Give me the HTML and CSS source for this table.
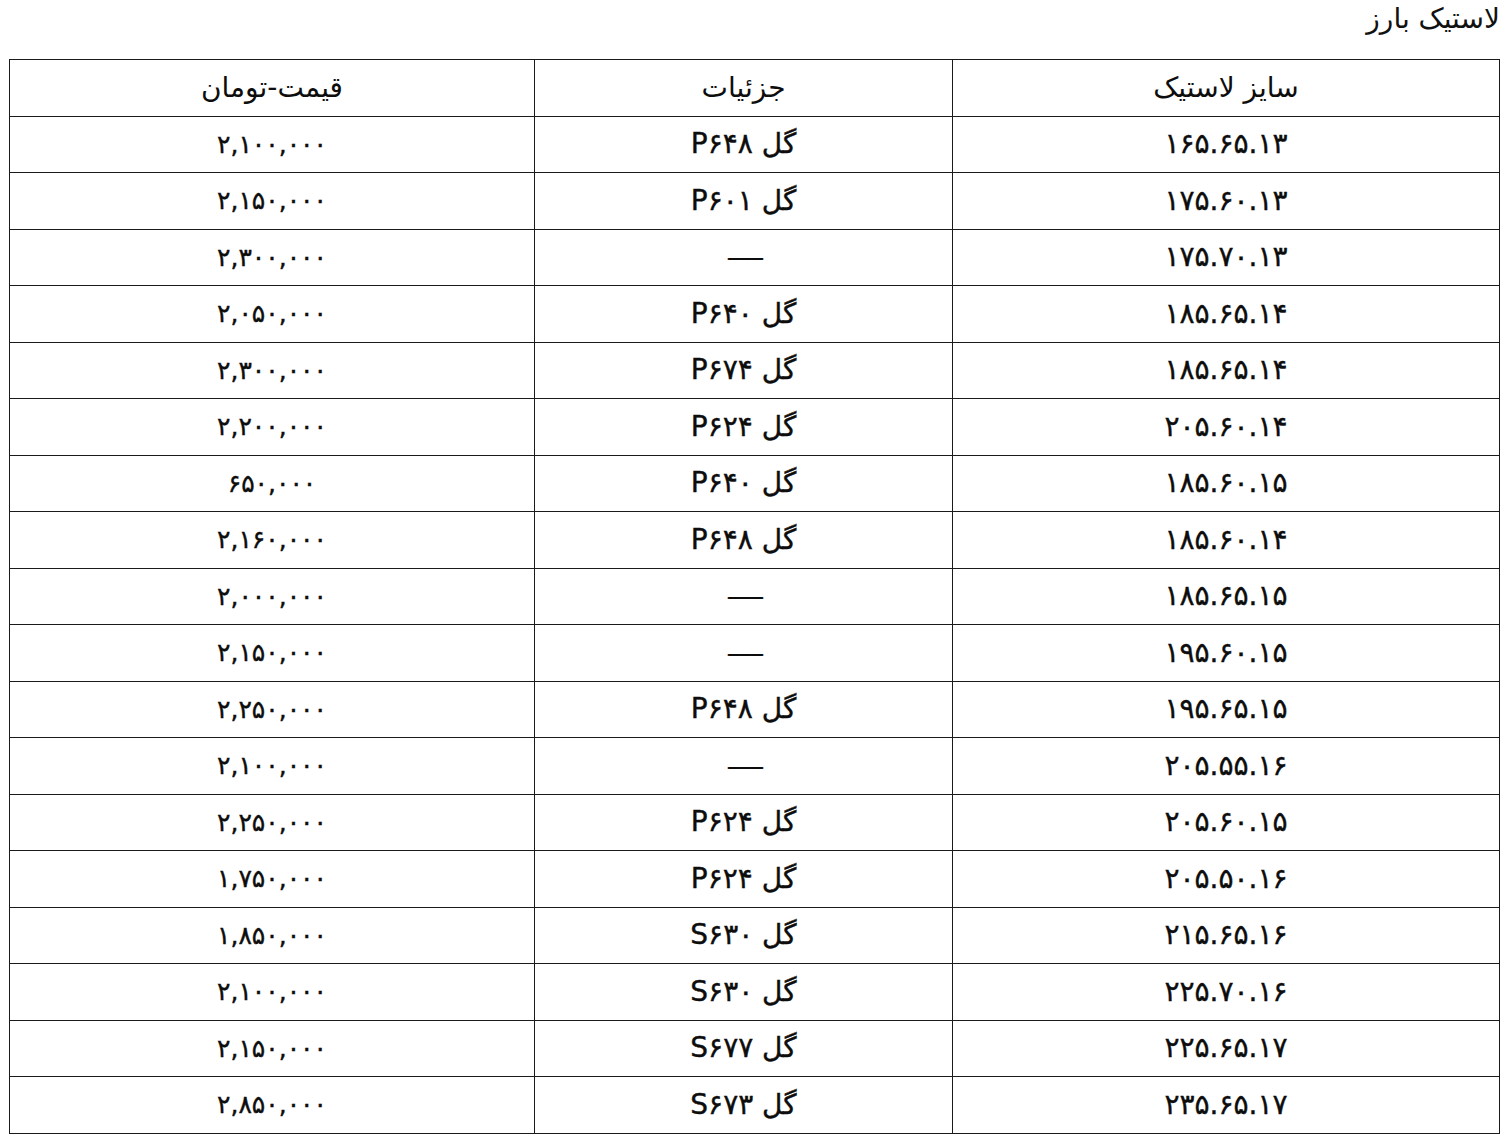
FILE: index.html
```html
<!DOCTYPE html>
<html lang="fa" dir="rtl">
<head>
<meta charset="utf-8">
<title>لاستیک بارز</title>
<link rel="stylesheet" href="styles.css">
</head>
<body>
<h1 class="title">لاستیک بارز</h1>
<table class="price-table">
<colgroup>
<col class="col-size">
<col class="col-detail">
<col class="col-price">
</colgroup>
<thead>
<tr><th>سایز لاستیک</th><th>جزئیات</th><th>قیمت-تومان</th></tr>
</thead>
<tbody>
<tr><td>۱۶۵.۶۵.۱۳</td><td>گل P۶۴۸</td><td class="price">۲,۱۰۰,۰۰۰</td></tr>
<tr><td>۱۷۵.۶۰.۱۳</td><td>گل P۶۰۱</td><td class="price">۲,۱۵۰,۰۰۰</td></tr>
<tr><td>۱۷۵.۷۰.۱۳</td><td class="dash"><span>---</span></td><td class="price">۲,۳۰۰,۰۰۰</td></tr>
<tr><td>۱۸۵.۶۵.۱۴</td><td>گل P۶۴۰</td><td class="price">۲,۰۵۰,۰۰۰</td></tr>
<tr><td>۱۸۵.۶۵.۱۴</td><td>گل P۶۷۴</td><td class="price">۲,۳۰۰,۰۰۰</td></tr>
<tr><td>۲۰۵.۶۰.۱۴</td><td>گل P۶۲۴</td><td class="price">۲,۲۰۰,۰۰۰</td></tr>
<tr><td>۱۸۵.۶۰.۱۵</td><td>گل P۶۴۰</td><td class="price">۶۵۰,۰۰۰</td></tr>
<tr><td>۱۸۵.۶۰.۱۴</td><td>گل P۶۴۸</td><td class="price">۲,۱۶۰,۰۰۰</td></tr>
<tr><td>۱۸۵.۶۵.۱۵</td><td class="dash"><span>---</span></td><td class="price">۲,۰۰۰,۰۰۰</td></tr>
<tr><td>۱۹۵.۶۰.۱۵</td><td class="dash"><span>---</span></td><td class="price">۲,۱۵۰,۰۰۰</td></tr>
<tr><td>۱۹۵.۶۵.۱۵</td><td>گل P۶۴۸</td><td class="price">۲,۲۵۰,۰۰۰</td></tr>
<tr><td>۲۰۵.۵۵.۱۶</td><td class="dash"><span>---</span></td><td class="price">۲,۱۰۰,۰۰۰</td></tr>
<tr><td>۲۰۵.۶۰.۱۵</td><td>گل P۶۲۴</td><td class="price">۲,۲۵۰,۰۰۰</td></tr>
<tr><td>۲۰۵.۵۰.۱۶</td><td>گل P۶۲۴</td><td class="price">۱,۷۵۰,۰۰۰</td></tr>
<tr><td>۲۱۵.۶۵.۱۶</td><td>گل S۶۳۰</td><td class="price">۱,۸۵۰,۰۰۰</td></tr>
<tr><td>۲۲۵.۷۰.۱۶</td><td>گل S۶۳۰</td><td class="price">۲,۱۰۰,۰۰۰</td></tr>
<tr><td>۲۲۵.۶۵.۱۷</td><td>گل S۶۷۷</td><td class="price">۲,۱۵۰,۰۰۰</td></tr>
<tr><td>۲۳۵.۶۵.۱۷</td><td>گل S۶۷۳</td><td class="price">۲,۸۵۰,۰۰۰</td></tr>
</tbody>
</table>
</body>
</html>
```
FILE: styles.css
```css
html, body {
  background: #ffffff;
}
body {
  margin: 0;
  padding: 0 10px;
  font-family: "DejaVu Sans", "Noto Sans", sans-serif;
  color: #111111;
}
.title {
  margin: 0;
  height: 59px;
  padding-top: 1px;
  box-sizing: border-box;
  font-size: 28px;
  font-weight: normal;
  line-height: 36px;
  text-align: right;
}
.price-table {
  width: 1490px;
  border-collapse: collapse;
  table-layout: fixed;
  border: 1.5px solid #1a1a1a;
}
.col-size { width: 547px; }
.col-detail { width: 418px; }
.col-price { width: 525px; }
.price-table th,
.price-table td {
  border: 1px solid #1a1a1a;
  height: 55.5px;
  padding: 0;
  text-align: center;
  vertical-align: middle;
  font-size: 28px;
  font-weight: normal;
  line-height: 1;
  color: #0d0d0d;
}
.price-table td {
  -webkit-text-stroke: 0.4px #0d0d0d;
}
.price-table td.price {
  font-size: 25px;
}
.price-table td.dash span {
  display: inline-block;
  font-size: 24px;
  letter-spacing: -2.6px;
  transform: scaleX(1.9);
  -webkit-text-stroke: 0.2px #0d0d0d;
}
```
